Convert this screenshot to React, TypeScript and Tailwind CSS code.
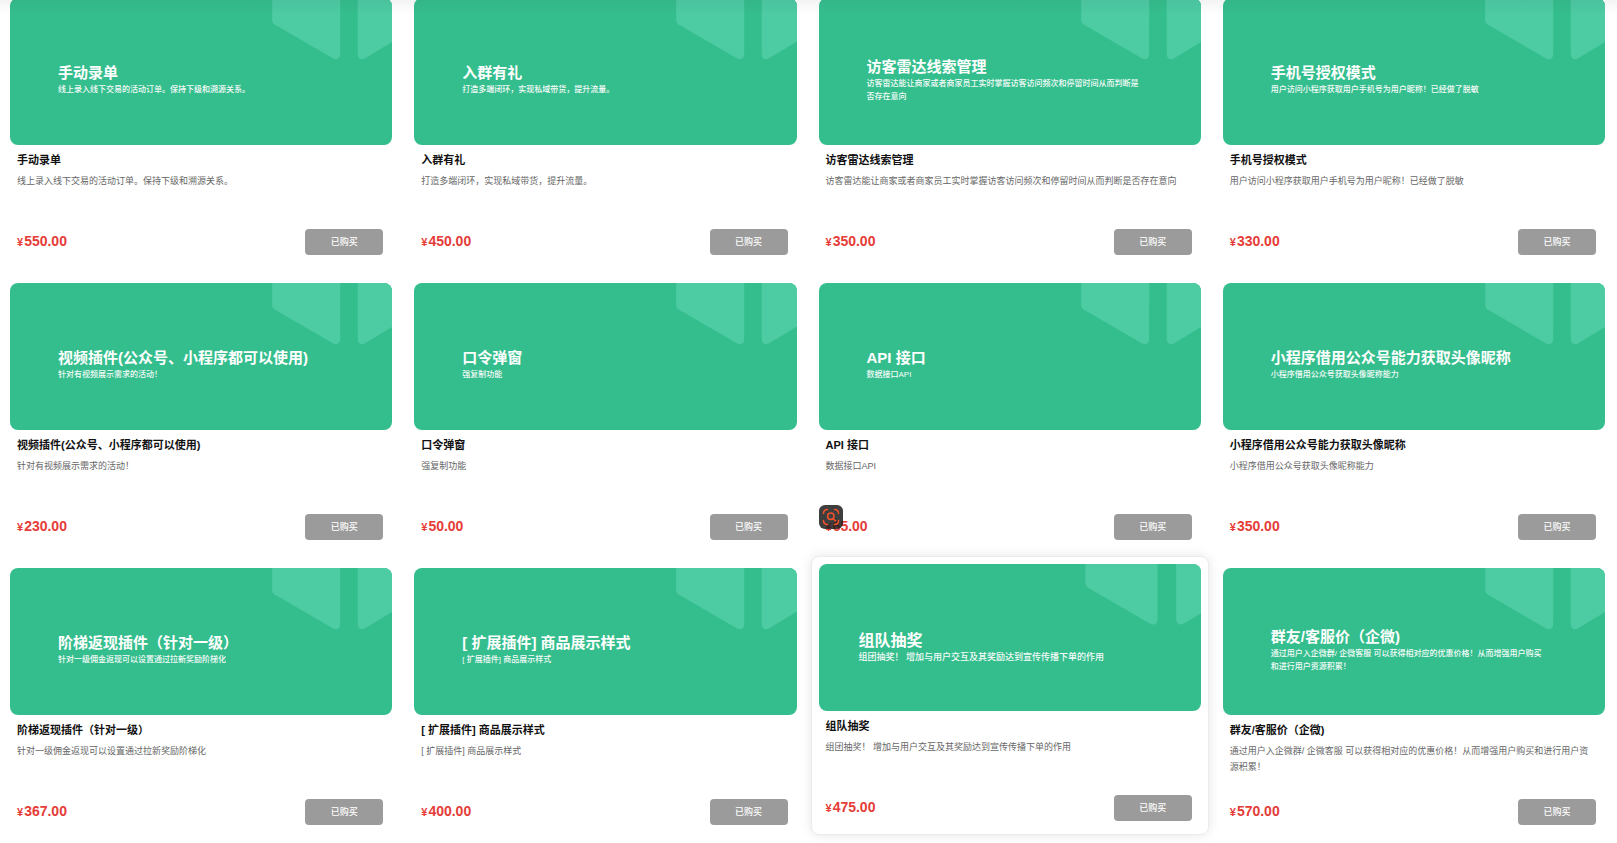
import React from "react";
import clsx from "clsx";

interface Plugin {
  title: string;
  desc: string;
  price: string;
  active?: boolean;
  scan?: boolean;
}

const plugins: Plugin[] = [
  {
    title: "手动录单",
    desc: "线上录入线下交易的活动订单。保持下级和溯源关系。",
    price: "550.00",
  },
  {
    title: "入群有礼",
    desc: "打造多端闭环，实现私域带货，提升流量。",
    price: "450.00",
  },
  {
    title: "访客雷达线索管理",
    desc: "访客雷达能让商家或者商家员工实时掌握访客访问频次和停留时间从而判断是否存在意向",
    price: "350.00",
  },
  {
    title: "手机号授权模式",
    desc: "用户访问小程序获取用户手机号为用户昵称！已经做了脱敏",
    price: "330.00",
  },
  {
    title: "视频插件(公众号、小程序都可以使用)",
    desc: "针对有视频展示需求的活动！",
    price: "230.00",
  },
  { title: "口令弹窗", desc: "强复制功能", price: "50.00" },
  { title: "API 接口", desc: "数据接口API", price: "65.00", scan: true },
  {
    title: "小程序借用公众号能力获取头像昵称",
    desc: "小程序借用公众号获取头像昵称能力",
    price: "350.00",
  },
  {
    title: "阶梯返现插件（针对一级）",
    desc: "针对一级佣金返现可以设置通过拉新奖励阶梯化",
    price: "367.00",
  },
  {
    title: "[ 扩展插件] 商品展示样式",
    desc: "[ 扩展插件] 商品展示样式",
    price: "400.00",
  },
  {
    title: "组队抽奖",
    desc: "组团抽奖！ 增加与用户交互及其奖励达到宣传传播下单的作用",
    price: "475.00",
    active: true,
  },
  {
    title: "群友/客服价（企微)",
    desc: "通过用户入企微群/ 企微客服 可以获得相对应的优惠价格！从而增强用户购买和进行用户资源积累！",
    price: "570.00",
  },
];

const BannerShape = ({ active }: { active?: boolean }) => (
  <svg
    viewBox="0 0 382 147"
    preserveAspectRatio="xMaxYMin slice"
    className={clsx("absolute inset-0 h-full w-full", active && "scale-106")}
    fill="#4dcba3"
    aria-hidden="true"
  >
    <path d="M262-10V22Q262 25 264.500 26.500L323 60.500Q330 63 330 55V-10Z" />
    <path d="M347.500-10V55Q347.500 63 354.500 60.500L400 33V-10Z" />
  </svg>
);

const ScanButton = () => (
  <button
    type="button"
    aria-label="Search image"
    className="flex size-6 items-center justify-center rounded-md bg-[#1c1c1c]/85"
  >
    <svg
      viewBox="0 0 24 24"
      className="size-6"
      fill="none"
      stroke="#f4532b"
      strokeWidth="1.500"
      strokeLinecap="round"
      aria-hidden="true"
    >
      <path d="M4.500 8.500C4.500 6 6 4.500 8.500 4.500M15.500 4.500C18 4.500 19.500 6 19.500 8.500M19.500 15.500C19.500 18 18 19.500 15.500 19.500M8.500 19.500C6 19.500 4.500 18 4.500 15.500" />
      <circle cx="11.800" cy="11.300" r="3.200" />
      <path d="M14.200 13.700l2.300 2.300" />
    </svg>
  </button>
);

const PluginCard = ({ plugin }: { plugin: Plugin }) => {
  const { title, desc, price, active, scan } = plugin;

  return (
    <article
      className={clsx(
        "relative rounded-lg border p-[7px]",
        active
          ? "-translate-y-1 border-[#ebebeb] bg-white shadow-[0_0_12px_rgba(0,0,0,0.1)]"
          : "border-transparent"
      )}
    >
      <div className="relative h-[147px] overflow-hidden rounded-lg bg-[#35be8d]">
        <BannerShape active={active} />
        <div
          className={clsx(
            "relative flex h-full flex-col justify-center text-white",
            active ? "px-10 pt-5" : "pl-12 pr-[58px] pt-4"
          )}
        >
          <p
            className={clsx(
              "font-bold leading-5",
              active ? "text-[16px]" : "text-[15px]"
            )}
          >
            {title}
          </p>
          <p
            className={clsx(
              "font-medium leading-[13px] opacity-95",
              active ? "text-[9px]" : "text-[8px]"
            )}
          >
            {desc}
          </p>
        </div>
      </div>

      <div className="pb-1.5 pl-[7px] pr-[9px] pt-2">
        <h3 className="text-[11px] font-bold leading-[15px] text-[#111111]">
          {title}
        </h3>
        <p className="mt-[5px] min-h-8 text-[9px] leading-4 text-[#666666]">
          {desc}
        </p>
        <div className="mt-6 flex items-center justify-between">
          <p className="flex items-baseline gap-px pb-0.5 font-bold leading-5 text-[#e53c38]">
            <span className="text-[11px]">¥</span>
            <span className="text-[14px]">{price}</span>
          </p>
          <button
            type="button"
            className="h-[26px] w-[78px] rounded-sm bg-[#9b9b9b] pt-0.5 text-[9px] font-medium text-white"
          >
            已购买
          </button>
        </div>
      </div>

      {scan && (
        <div className="absolute bottom-6 left-[7px]">
          <ScanButton />
        </div>
      )}
    </article>
  );
};

export default function App() {
  return (
    <div className="relative min-h-screen overflow-hidden bg-white font-['Liberation_Sans','Noto_Sans_CJK_SC',sans-serif]">
      <main className="-mt-2.5 grid grid-cols-4 gap-1.5 pl-0.5 pr-1">
        {plugins.map((plugin) => (
          <PluginCard key={plugin.title} plugin={plugin} />
        ))}
      </main>
      <div className="pointer-events-none absolute inset-x-0 top-0 h-3.5 bg-linear-to-b from-slate-900/5 to-transparent" />
    </div>
  );
}
